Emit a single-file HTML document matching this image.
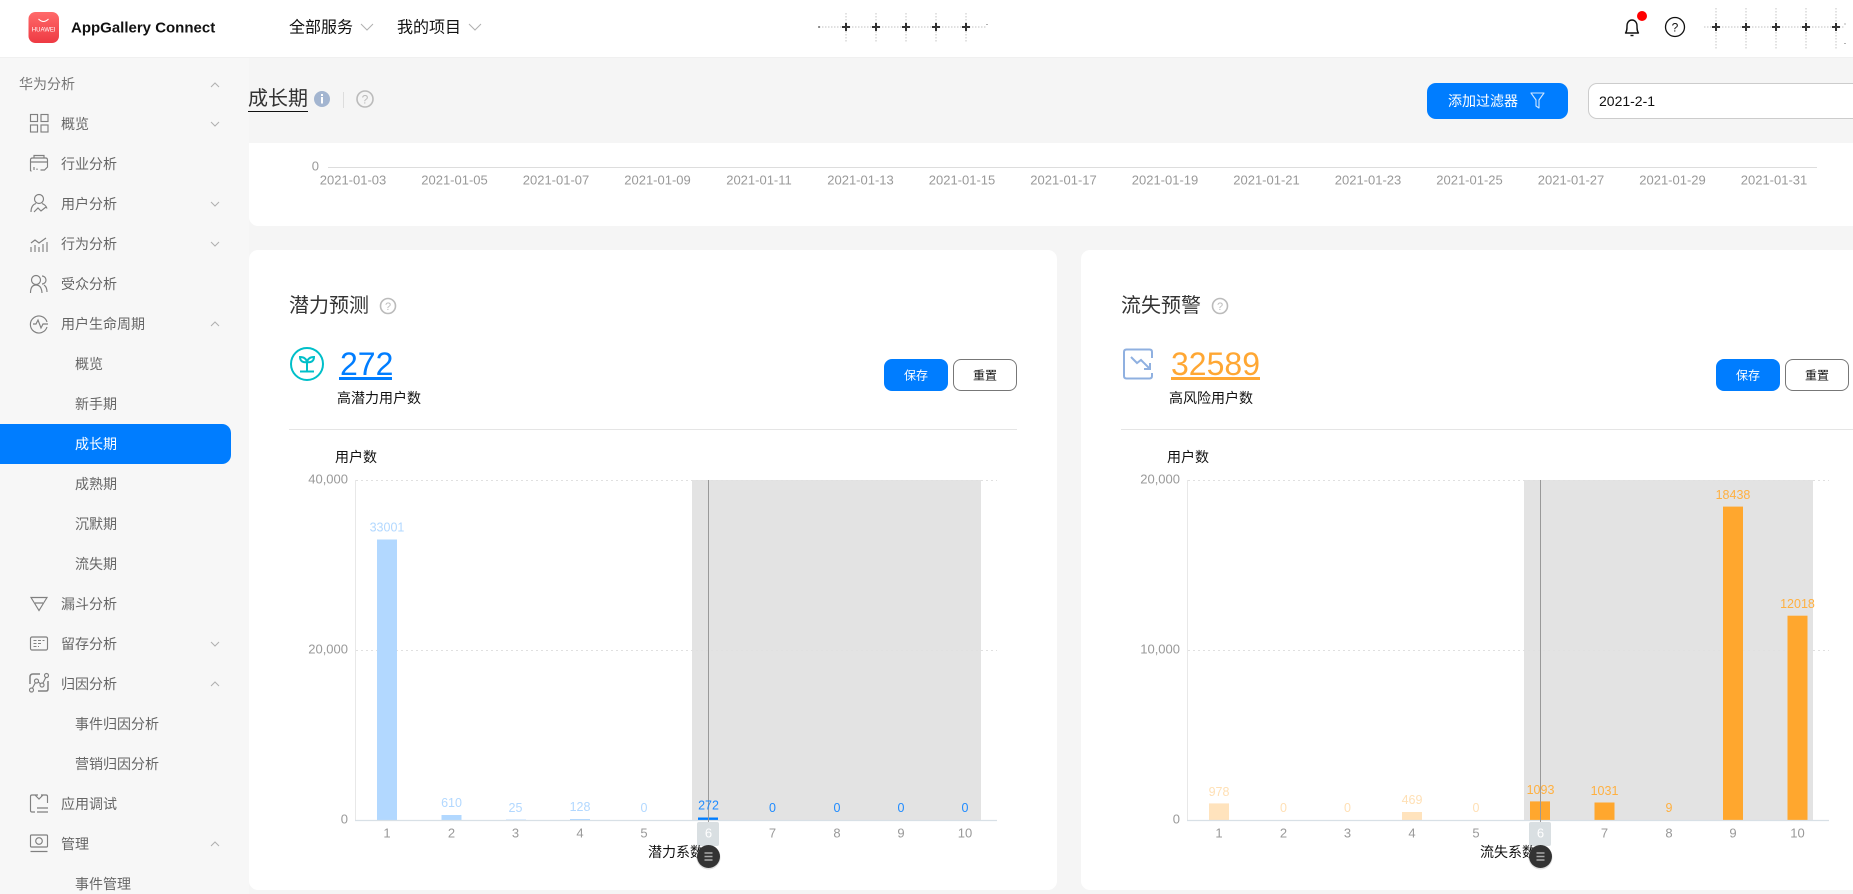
<!DOCTYPE html>
<html lang="zh">
<head>
<meta charset="utf-8">
<title>AppGallery Connect</title>
<style>
html,body{margin:0;padding:0;width:1853px;height:894px;overflow:hidden;background:#f5f5f5;font-family:"Liberation Sans","Noto Sans CJK SC",sans-serif}
.b{position:absolute}
svg{position:absolute;left:0;top:0}
text{font-family:"Liberation Sans","Noto Sans CJK SC",sans-serif}
.s{font-size:14px;fill:#666}
.ax{font-size:13px;fill:#999;text-anchor:middle}
.yl{font-size:13px;fill:#999;text-anchor:end}
.dl{font-size:12.5px;text-anchor:middle}
.ic{fill:none;stroke:#808080;stroke-width:1.15}
.ch{fill:none;stroke:#b0b0b0;stroke-width:1}
.gy{fill:none;stroke:#bbb;stroke-width:1.6}
</style>
</head>
<body>
<div class="b" style="left:0;top:0;width:1853px;height:57px;background:#fff;border-bottom:1px solid #f0f0f0;box-sizing:content-box"></div>
<div class="b" style="left:0;top:58px;width:249px;height:836px;background:#f7f7f7"></div>
<div class="b" style="left:0;top:424px;width:231px;height:40px;background:#007dff;border-radius:0 9px 9px 0"></div>
<div class="b" style="left:249px;top:143px;width:1604px;height:83px;background:#fff;border-radius:0 0 0 9px"></div>
<div class="b" style="left:249px;top:250px;width:808px;height:640px;background:#fff;border-radius:9px"></div>
<div class="b" style="left:1081px;top:250px;width:772px;height:640px;background:#fff;border-radius:9px 0 0 9px"></div>
<div class="b" style="left:1427px;top:83px;width:141px;height:36px;background:#007dff;border-radius:9px"></div>
<div class="b" style="left:1588px;top:83px;width:290px;height:36px;background:#fff;border:1px solid #ccc;border-radius:9px;box-sizing:border-box"></div>
<div class="b" style="left:884px;top:359px;width:64px;height:32px;background:#007dff;border-radius:8px"></div>
<div class="b" style="left:953px;top:359px;width:64px;height:32px;background:#fff;border:1px solid #777;border-radius:8px;box-sizing:border-box"></div>
<div class="b" style="left:1716px;top:359px;width:64px;height:32px;background:#007dff;border-radius:8px"></div>
<div class="b" style="left:1785px;top:359px;width:64px;height:32px;background:#fff;border:1px solid #777;border-radius:8px;box-sizing:border-box"></div>

<svg width="1853" height="894" viewBox="0 0 1853 894" xmlns="http://www.w3.org/2000/svg">
<defs>
<linearGradient id="lg" x1="0" y1="0" x2="0" y2="1"><stop offset="0" stop-color="#ff6a6a"/><stop offset="1" stop-color="#ee3a43"/></linearGradient>
</defs>

<!-- header -->
<rect x="28.500" y="12" width="30.500" height="31" rx="7" fill="url(#lg)"/>
<path d="M38.500 19q5 5 10 0" fill="none" stroke="#fff" stroke-width="1"/>
<text x="43.700" y="31.500" font-size="6" fill="#fff" text-anchor="middle">HUAWEI</text>
<text x="71" y="32.500" font-size="15" font-weight="700" fill="#111">AppGallery Connect</text>
<text x="289" y="32.500" font-size="16" fill="#111">全部服务</text>
<path class="ch" d="M361 24l6 6 6-6" stroke="#999"/>
<text x="397" y="32.500" font-size="16" fill="#111">我的项目</text>
<path class="ch" d="M469 24l6 6 6-6" stroke="#999"/>

<!-- masked block 1 -->
<g fill="none">
<path d="M819 27H987" stroke="#e0e0e0" stroke-width="2" stroke-dasharray="1.500 1.500"/>
<path d="M846 13V43M876 13V43M906 13V43M936 13V43M966 13V43" stroke="#e2e2e2" stroke-width="2" stroke-dasharray="1.500 1.500"/>
<path d="M842 27h8M846 23v8M872 27h8M876 23v8M902 27h8M906 23v8M932 27h8M936 23v8M962 27h8M966 23v8" stroke="#333" stroke-width="2"/>
<path d="M819 26v2" stroke="#333"/><path d="M987 24v1" stroke="#666"/>
</g>

<!-- bell / help -->
<path d="M1625.500 33c1.500-2 1.500-4 1.500-7 0-3.500 2-6 5-6s5 2.500 5 6c0 3 0 5 1.500 7z" fill="none" stroke="#111" stroke-width="1.400" stroke-linejoin="round"/>
<path d="M1630.500 35.500h3" stroke="#111" stroke-width="1.400"/>
<circle cx="1642" cy="16" r="5" fill="#f00"/>
<circle cx="1675" cy="27" r="9.500" fill="none" stroke="#111" stroke-width="1.300"/>
<text x="1675" y="31.500" font-size="12" fill="#111" text-anchor="middle">?</text>

<!-- masked block 2 -->
<g fill="none">
<path d="M1704 27H1845" stroke="#e0e0e0" stroke-width="2" stroke-dasharray="1.500 1.500"/>
<path d="M1716 8V49M1746 8V49M1776 8V49M1806 8V49M1836 8V49" stroke="#e2e2e2" stroke-width="2" stroke-dasharray="1.500 1.500"/>
<path d="M1712 27h8M1716 23v8M1742 27h8M1746 23v8M1772 27h8M1776 23v8M1802 27h8M1806 23v8M1832 27h8M1836 23v8" stroke="#333" stroke-width="2"/>
<path d="M1845 23.500v1M1845 43v1" stroke="#666"/>
</g>

<!-- sidebar -->
<text x="19" y="89" class="s" fill="#777" style="fill:#777">华为分析</text>
<path class="ch" d="M211 87l4-4 4 4"/>
<g class="s">
<text x="61" y="129">概览</text>
<text x="61" y="169">行业分析</text>
<text x="61" y="209">用户分析</text>
<text x="61" y="249">行为分析</text>
<text x="61" y="289">受众分析</text>
<text x="61" y="329">用户生命周期</text>
<text x="75" y="369">概览</text>
<text x="75" y="409">新手期</text>
<text x="75" y="449" style="fill:#fff">成长期</text>
<text x="75" y="489">成熟期</text>
<text x="75" y="529">沉默期</text>
<text x="75" y="569">流失期</text>
<text x="61" y="609">漏斗分析</text>
<text x="61" y="649">留存分析</text>
<text x="61" y="689">归因分析</text>
<text x="75" y="729">事件归因分析</text>
<text x="75" y="769">营销归因分析</text>
<text x="61" y="809">应用调试</text>
<text x="61" y="849">管理</text>
<text x="75" y="889">事件管理</text>
</g>
<path class="ch" d="M211 122l4 4 4-4M211 202l4 4 4-4M211 242l4 4 4-4M211 642l4 4 4-4M211 326l4-4 4 4M211 686l4-4 4 4M211 846l4-4 4 4"/>

<!-- sidebar icons -->
<g class="ic">
<rect x="30.500" y="114.500" width="7" height="7"/><rect x="41" y="114.500" width="7" height="7"/><rect x="30.500" y="125" width="7" height="7"/><rect x="41" y="125" width="7" height="7"/>
<path d="M30.500 171V160q0-2 2-2h13q2 0 2 2v7l-3 3h-4M34 158v-2.500h10V158M30.500 162h17M34 170v-3M37 170v-1.500M30.500 171h1"/>
<circle cx="39" cy="199" r="4.500"/><path d="M31 212q0-7 5-8.500M42 203.500q4 1.500 5 5M34 212l4-4 3 3 5-4"/>
<path d="M31 243l4-3 4 3 7-5M31 252v-5M35 252v-7M39 252v-5M43 252v-8M47 252v-10"/>
<circle cx="36" cy="280" r="4.500"/><path d="M30.500 293q0-8 5.500-8t6 8M42 276a4 4 0 0 1 0 8M44 285q3 2 3 7"/>
<path d="M47 322a8.500 8.500 0 1 0 0 5M33 324h3l2-4 3 8 2-4h5"/>
<path d="M31 597.500h16l-8 13zM35 603h8"/>
<rect x="30.500" y="637" width="17" height="13" rx="1.500"/><path d="M33.500 640.500h3M38 640.500h3M42.500 640.500h2M33.500 643.500h3M38 643.500h3M33.500 646.500h3M38 646.500h1" stroke-width="1"/>
<path d="M30 684v-7q0-3 3-3h7M48 681v8q0 2-2 2h-8" stroke-width="1.500"/>
<circle cx="31.500" cy="690" r="2"/><circle cx="36.500" cy="681" r="2"/><circle cx="42" cy="685" r="2"/><circle cx="46.500" cy="675.500" r="2"/>
<path d="M32.500 688l3-5.500M38.500 682l2 2M43 683l3-6"/>
<path d="M38 795h-6q-1.500 0-1.500 1.500v14q0 1.500 1.500 1.500h3M41 795h5q1.500 0 1.500 1.500V803M35 795l4 4 4-4M37 808h11M37 812h11" />
<rect x="30.500" y="835" width="17" height="12" rx="1"/><circle cx="39" cy="841" r="3.300"/><path d="M30.500 851.500h17"/>
</g>

<!-- page title -->
<text x="248" y="105" font-size="20" fill="#333">成长期</text>
<path d="M248 111.500h60" stroke="#111"/>
<circle cx="322" cy="99" r="8" fill="#a3b5d0"/>
<rect x="321" y="97" width="2" height="6.500" fill="#fff"/><rect x="321" y="94" width="2" height="2" fill="#fff"/>
<path d="M343.500 92v16" stroke="#ddd"/>
<circle cx="365" cy="99" r="8" class="gy"/>
<text x="365" y="103.500" font-size="12" fill="#bbb" text-anchor="middle">?</text>

<!-- filter button + date -->
<text x="1448" y="106" font-size="14" fill="#fff">添加过滤器</text>
<path d="M1531 93h13l-5 7v8l-3-2v-6z" fill="none" stroke="#cfe6ff" stroke-width="1.100" stroke-linejoin="round"/>
<text x="1599" y="106" font-size="14" fill="#111">2021-2-1</text>

<!-- top chart -->
<path d="M328 167.500H1817" stroke="#ddd"/>
<text x="319" y="170.500" class="yl">0</text>
<g class="ax">
<text x="353" y="184.500">2021-01-03</text><text x="454.500" y="184.500">2021-01-05</text><text x="556" y="184.500">2021-01-07</text><text x="657.500" y="184.500">2021-01-09</text><text x="759" y="184.500">2021-01-11</text><text x="860.500" y="184.500">2021-01-13</text><text x="962" y="184.500">2021-01-15</text><text x="1063.500" y="184.500">2021-01-17</text><text x="1165" y="184.500">2021-01-19</text><text x="1266.500" y="184.500">2021-01-21</text><text x="1368" y="184.500">2021-01-23</text><text x="1469.500" y="184.500">2021-01-25</text><text x="1571" y="184.500">2021-01-27</text><text x="1672.500" y="184.500">2021-01-29</text><text x="1774" y="184.500">2021-01-31</text>
</g>

<!-- LEFT CARD -->
<text x="289" y="312" font-size="20" fill="#333">潜力预测</text>
<circle cx="388" cy="306" r="7.500" class="gy"/>
<text x="388" y="310" font-size="11" fill="#bbb" text-anchor="middle">?</text>
<circle cx="307" cy="364" r="16" fill="none" stroke="#00bfc9" stroke-width="2"/>
<path d="M307 371v-10M307 362c-1-4-4-5-7-5 0 4 3 6 7 5zM307 362c1-4 4-5 7-5 0 4-3 6-7 5zM300 371.500h14" fill="none" stroke="#00bfc9" stroke-width="2"/>
<text x="340" y="375" font-size="32" fill="#007dff">272</text>
<rect x="339" y="377" width="53" height="3" fill="#007dff"/>
<text x="337" y="403" font-size="14" fill="#111">高潜力用户数</text>
<text x="916" y="379.500" font-size="12" fill="#fff" text-anchor="middle">保存</text>
<text x="985" y="379.500" font-size="12" fill="#111" text-anchor="middle">重置</text>
<path d="M289 429.500H1017" stroke="#e5e5e5"/>
<text x="335" y="462" font-size="14" fill="#111">用户数</text>

<rect x="692" y="480" width="289" height="340" fill="#e3e3e3"/>
<path d="M356 480.500H997M356 650.500H997" stroke="#e0e0e0" stroke-dasharray="2 3"/>
<path d="M355.500 480V820" stroke="#e8e8e8"/>
<text x="348" y="483.500" class="yl">40,000</text>
<text x="348" y="653.500" class="yl">20,000</text>
<text x="348" y="823.500" class="yl">0</text>

<rect x="377" y="539.500" width="20" height="280.500" fill="#b2d8ff"/>
<rect x="441.500" y="815" width="20" height="5" fill="#b2d8ff"/>
<rect x="506" y="819.500" width="20" height="0.500" fill="#b2d8ff"/>
<rect x="570" y="819" width="20" height="1" fill="#b2d8ff"/>
<rect x="698" y="817.500" width="20" height="2.500" fill="#007dff"/>
<path d="M355 820.500H997" stroke="#d8e0e6" stroke-width="1.200"/>
<path d="M708.500 480V845" stroke="#999"/>

<g class="dl" fill="#b2d8ff">
<text x="387" y="531.500">33001</text><text x="451.500" y="807">610</text><text x="515.500" y="812">25</text><text x="580" y="811">128</text><text x="644" y="812">0</text>
</g>
<g class="dl" fill="#1f8bff">
<text x="708.500" y="809.500">272</text><text x="772.500" y="812">0</text><text x="837" y="812">0</text><text x="901" y="812">0</text><text x="965" y="812">0</text>
</g>
<g class="ax">
<text x="387" y="837.500">1</text><text x="451.500" y="837.500">2</text><text x="515.500" y="837.500">3</text><text x="580" y="837.500">4</text><text x="644" y="837.500">5</text><text x="772.500" y="837.500">7</text><text x="837" y="837.500">8</text><text x="901" y="837.500">9</text><text x="965" y="837.500">10</text>
</g>
<rect x="697" y="822" width="22" height="24" rx="2" fill="#d9dfe2"/>
<text x="708.500" y="837.500" font-size="13" fill="#fff" text-anchor="middle">6</text>
<text x="648" y="857" font-size="14" fill="#111">潜力系数</text>
<ellipse cx="708.500" cy="857.500" rx="12" ry="12" fill="#000" opacity=".12"/>
<circle cx="708.500" cy="856.500" r="11.500" fill="#333"/>
<path d="M704.500 853h8M704.500 856.500h8M704.500 860h8" stroke="#aaa" stroke-width="1.500"/>

<!-- RIGHT CARD -->
<text x="1121" y="312" font-size="20" fill="#333">流失预警</text>
<circle cx="1220" cy="306" r="7.500" class="gy"/>
<text x="1220" y="310" font-size="11" fill="#bbb" text-anchor="middle">?</text>
<path d="M1152 358v-6q0-2.500-2.500-2.500h-23q-2.500 0-2.500 2.500v24q0 2.500 2.500 2.500h23q2.500 0 2.500-2.500v-3" fill="none" stroke="#8fb0e0" stroke-width="2"/>
<path d="M1131 357l6 6 4-3 9 9M1150 363v6h-6" fill="none" stroke="#8fb0e0" stroke-width="2"/>
<text x="1171" y="375" font-size="32" fill="#ffa733">32589</text>
<rect x="1171" y="377" width="89" height="3" fill="#ffa733"/>
<text x="1169" y="403" font-size="14" fill="#111">高风险用户数</text>
<text x="1748" y="379.500" font-size="12" fill="#fff" text-anchor="middle">保存</text>
<text x="1817" y="379.500" font-size="12" fill="#111" text-anchor="middle">重置</text>
<path d="M1121 429.500H1853" stroke="#e5e5e5"/>
<text x="1167" y="462" font-size="14" fill="#111">用户数</text>

<rect x="1524" y="480" width="289" height="340" fill="#e3e3e3"/>
<path d="M1188 480.500H1829M1188 650.500H1829" stroke="#e0e0e0" stroke-dasharray="2 3"/>
<path d="M1187.500 480V820" stroke="#e8e8e8"/>
<text x="1180" y="483.500" class="yl">20,000</text>
<text x="1180" y="653.500" class="yl">10,000</text>
<text x="1180" y="823.500" class="yl">0</text>

<rect x="1209" y="803.400" width="20" height="16.600" fill="#ffe3bd"/>
<rect x="1402" y="812" width="20" height="8" fill="#ffe3bd"/>
<rect x="1530" y="801.400" width="20" height="18.600" fill="#ffa72e"/>
<rect x="1594.500" y="802.500" width="20" height="17.500" fill="#ffa72e"/>
<rect x="1723" y="506.600" width="20" height="313.400" fill="#ffa72e"/>
<rect x="1787.500" y="615.700" width="20" height="204.300" fill="#ffa72e"/>
<path d="M1187 820.500H1829" stroke="#d8e0e6" stroke-width="1.200"/>
<path d="M1540.500 480V845" stroke="#999"/>

<g class="dl" fill="#ffe0b5">
<text x="1219" y="796">978</text><text x="1283.500" y="812">0</text><text x="1347.500" y="812">0</text><text x="1412" y="804">469</text><text x="1476" y="812">0</text>
</g>
<g class="dl" fill="#ffb040">
<text x="1540.500" y="794">1093</text><text x="1604.500" y="795">1031</text><text x="1669" y="812">9</text><text x="1733" y="499">18438</text><text x="1797.500" y="608">12018</text>
</g>
<g class="ax">
<text x="1219" y="837.500">1</text><text x="1283.500" y="837.500">2</text><text x="1347.500" y="837.500">3</text><text x="1412" y="837.500">4</text><text x="1476" y="837.500">5</text><text x="1604.500" y="837.500">7</text><text x="1669" y="837.500">8</text><text x="1733" y="837.500">9</text><text x="1797.500" y="837.500">10</text>
</g>
<rect x="1529" y="822" width="22" height="24" rx="2" fill="#d9dfe2"/>
<text x="1540.500" y="837.500" font-size="13" fill="#fff" text-anchor="middle">6</text>
<text x="1480" y="857" font-size="14" fill="#111">流失系数</text>
<ellipse cx="1540.500" cy="857.500" rx="12" ry="12" fill="#000" opacity=".12"/>
<circle cx="1540.500" cy="856.500" r="11.500" fill="#333"/>
<path d="M1536.500 853h8M1536.500 856.500h8M1536.500 860h8" stroke="#aaa" stroke-width="1.500"/>
</svg>
</body>
</html>
